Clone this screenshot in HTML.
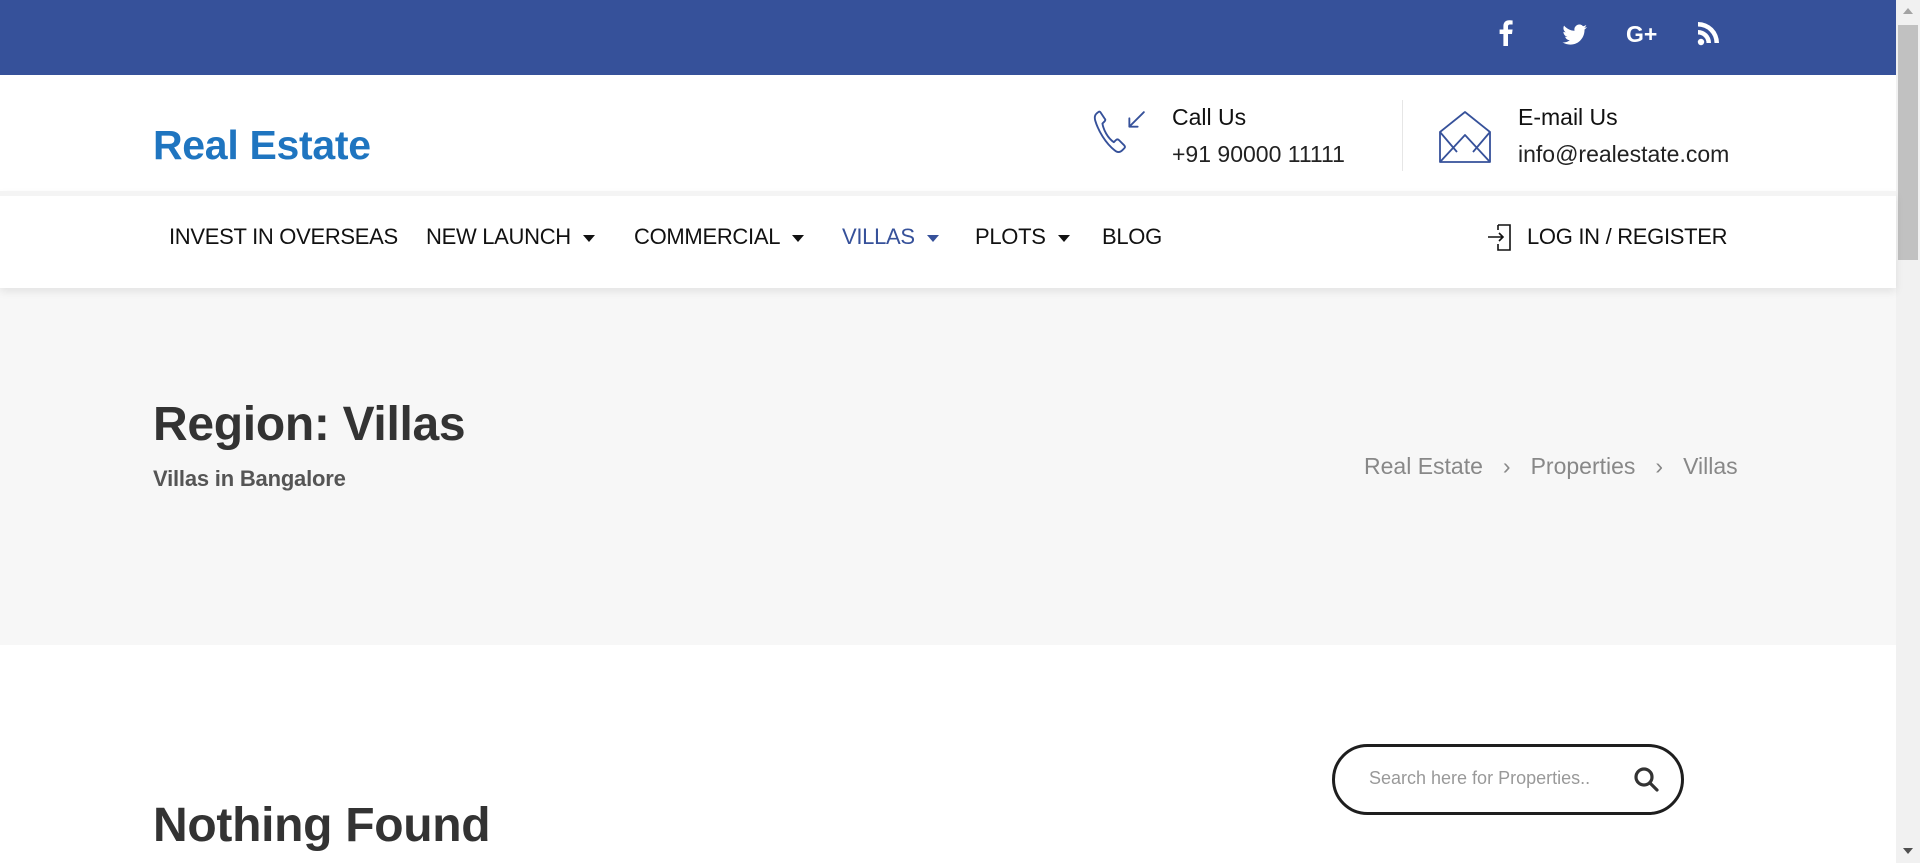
<!DOCTYPE html>
<html><head><meta charset="utf-8"><style>
*{margin:0;padding:0;box-sizing:border-box}
body{width:1920px;height:863px;overflow:hidden;font-family:"Liberation Sans",sans-serif;background:#fff;position:relative;color:#333}
.abs{position:absolute}
.top{left:0;top:0;width:1896px;height:75px;background:#36519a}
.hdr{left:0;top:75px;width:1896px;height:116px;background:#fff}
.nav{left:0;top:191px;width:1896px;height:97px;background:#fff;border-top:5px solid #f4f4f4;box-shadow:0 4px 8px rgba(0,0,0,.08);z-index:2}
.ban{left:0;top:288px;width:1896px;height:357px;background:#f7f7f7}
.sb{left:1896px;top:0;width:24px;height:863px;background:#f1f1f1}
.thumb{left:1898px;top:25px;width:20px;height:235px;background:#c1c1c1}
.navi{top:224px;font-size:22px;color:#111;letter-spacing:-.3px;white-space:nowrap}
.car{display:inline-block;width:0;height:0;border-left:6px solid transparent;border-right:6px solid transparent;border-top:7px solid #111;vertical-align:middle;margin-left:12px}
</style></head><body>
<div class="abs top"></div>
<svg class="abs" style="left:1490px;top:18px" width="240" height="30" viewBox="0 0 240 30" fill="#fff">
 <path d="M18 28V16h4l.6-4.5H18V8.7c0-1.3.4-2.2 2.2-2.2h2.4V2.5c-.4-.1-1.8-.2-3.5-.2-3.4 0-5.7 2.1-5.7 5.9v3.3H9.6V16h3.8v12z"/>
 <path d="M97 9c-.9.4-1.9.7-2.9.8 1-.6 1.8-1.6 2.2-2.8-1 .6-2.1 1-3.2 1.2a5 5 0 0 0-8.6 4.6c-4.2-.2-7.9-2.2-10.4-5.2-1.4 2.4-.5 5.3 1.6 6.7-.8 0-1.6-.3-2.3-.6 0 2.5 1.7 4.5 4 5-.7.2-1.5.2-2.3.1.7 2 2.5 3.4 4.7 3.5-2.1 1.6-4.7 2.4-7.3 2.1 2.2 1.4 4.9 2.2 7.7 2.2 9.3 0 14.6-7.9 14.3-15 1-.7 1.8-1.6 2.5-2.6z"/>
 <text x="136" y="24" font-family="Liberation Sans" font-weight="bold" font-size="23">G+</text>
 <circle cx="211" cy="24" r="3.2"/>
 <path d="M208 12v4.5a8.5 8.5 0 0 1 8.5 8.5h4.5A13 13 0 0 0 208 12zM208 4v4.5A16.5 16.5 0 0 1 224.5 25h4.5A21 21 0 0 0 208 4z"/>
</svg>
<div class="abs hdr"></div>
<div class="abs" style="left:153px;top:122px;font-size:41px;font-weight:bold;color:#1f75c0;letter-spacing:-.3px">Real Estate</div>
<svg class="abs" style="left:1090px;top:108px" width="58" height="58" viewBox="0 0 56 56" fill="none" stroke="#36519a" stroke-width="1.8" stroke-linecap="round" stroke-linejoin="round">
 <path d="M8 4c-3 2-4 4-3 8 3 10 10 22 19 29 2 2 5 2 7 0l2-2c1-1 1-2 0-3l-5-5c-1-1-2-1-3 0l-2 2C17 29 13 21 12 15l2-2c1-1 1-2 0-3L10 4C9 3 8.5 3.5 8 4z"/>
 <path d="M52 4L38 18M38 10v8h8"/>
</svg>
<div class="abs" style="left:1172px;top:104px;font-size:23px;color:#111">Call Us</div>
<div class="abs" style="left:1172px;top:141px;font-size:23px;color:#222">+91 90000 11111</div>
<div class="abs" style="left:1402px;top:100px;width:1px;height:71px;background:#e6e6e6"></div>
<svg class="abs" style="left:1438px;top:110px" width="54" height="54" viewBox="0 0 54 54" fill="none" stroke="#36519a" stroke-width="1.8" stroke-linejoin="round">
 <path d="M2 52V22L27 2l25 20v30z"/>
 <path d="M2 22l17 20M52 22L35 42M2 52l25-27 25 27"/>
</svg>
<div class="abs" style="left:1518px;top:104px;font-size:23px;color:#111">E-mail Us</div>
<div class="abs" style="left:1518px;top:141px;font-size:23px;color:#222">info@realestate.com</div>

<div class="abs nav"></div>
<div class="abs navi" style="left:169px;z-index:3">INVEST IN OVERSEAS</div>
<div class="abs navi" style="left:426px;z-index:3">NEW LAUNCH<span class="car"></span></div>
<div class="abs navi" style="left:634px;z-index:3">COMMERCIAL<span class="car"></span></div>
<div class="abs navi" style="left:842px;z-index:3;color:#36519a">VILLAS<span class="car" style="border-top-color:#36519a"></span></div>
<div class="abs navi" style="left:975px;z-index:3">PLOTS<span class="car"></span></div>
<div class="abs navi" style="left:1102px;z-index:3">BLOG</div>
<svg class="abs" style="left:1486px;top:222px;z-index:3" width="30" height="30" viewBox="0 0 30 30" fill="none" stroke="#111" stroke-width="1.6">
 <path d="M12 3h12v25H12v-6M12 3v5"/><path d="M2 15h15M13 11l4 4-4 4"/>
</svg>
<div class="abs navi" style="left:1527px;z-index:3">LOG IN / REGISTER</div>

<div class="abs ban"></div>
<div class="abs" style="left:153px;top:397px;font-size:48px;font-weight:bold;color:#333;letter-spacing:-.3px">Region: Villas</div>
<div class="abs" style="left:153px;top:466px;font-size:22px;font-weight:bold;color:#555;letter-spacing:-.2px">Villas in Bangalore</div>
<div class="abs" style="left:1364px;top:453px;font-size:23px;color:#888;white-space:nowrap">Real Estate<span style="margin:0 20px">›</span>Properties<span style="margin:0 20px">›</span>Villas</div>

<div class="abs" style="left:1332px;top:744px;width:352px;height:71px;border:3px solid #1e1e1e;border-radius:36px"></div>
<div class="abs" style="left:1369px;top:768px;font-size:18px;color:#999">Search here for Properties..</div>
<svg class="abs" style="left:1632px;top:765px" width="30" height="30" viewBox="0 0 30 30" fill="none" stroke="#333" stroke-width="3.2" stroke-linecap="round"><circle cx="12" cy="12" r="8"/><path d="M18 18l7 7"/></svg>
<div class="abs" style="left:153px;top:798px;font-size:48px;font-weight:bold;color:#333;letter-spacing:-.3px">Nothing Found</div>

<div class="abs sb"></div>
<div class="abs thumb"></div>
<div class="abs" style="left:1903px;top:8px;width:0;height:0;border-left:5px solid transparent;border-right:5px solid transparent;border-bottom:6px solid #a3a3a3"></div>
<div class="abs" style="left:1903px;top:848px;width:0;height:0;border-left:5px solid transparent;border-right:5px solid transparent;border-top:6px solid #505050"></div>
</body></html>
